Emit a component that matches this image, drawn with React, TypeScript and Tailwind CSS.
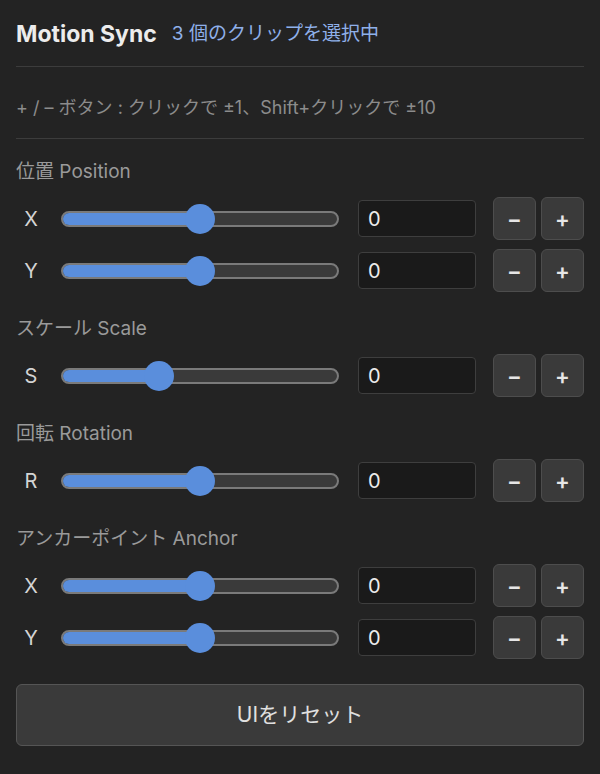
import React from 'react';

type Axis = { label: string; pct: number };
type Group = { title: string; axes: Axis[] };

const groups: Group[] = [
  { title: '位置 Position', axes: [{ label: 'X', pct: 0.5 }, { label: 'Y', pct: 0.5 }] },
  { title: 'スケール Scale', axes: [{ label: 'S', pct: 1 / 3 }] },
  { title: '回転 Rotation', axes: [{ label: 'R', pct: 0.5 }] },
  { title: 'アンカーポイント Anchor', axes: [{ label: 'X', pct: 0.5 }, { label: 'Y', pct: 0.5 }] },
];

const THUMB = 30;

const Slider: React.FC<{ pct: number }> = ({ pct }) => {
  // thumb travels inside the track like a native range input
  const center = `calc(${THUMB / 2}px + (100% - ${THUMB}px) * ${pct})`;
  return (
    <div className="relative flex-1 h-[30px] flex items-center">
      <div className="relative w-full h-4 rounded-full border-2 border-[#7a7a7a] bg-[#3a3a3a] overflow-hidden">
        <div className="h-full bg-[#5a8edc]" style={{ width: center }} />
      </div>
      <div
        className="absolute top-0 w-[30px] h-[30px] rounded-full bg-[#5a8edc]"
        style={{ left: `calc(${center} - ${THUMB / 2}px)` }}
      />
    </div>
  );
};

const StepButton: React.FC<{ children: React.ReactNode }> = ({ children }) => (
  <button className="w-[43px] h-[43px] rounded-md bg-[#3a3a3a] border border-[#4d4d4d] text-[#e6e6e6] text-[22px] font-semibold flex items-center justify-center leading-none">
    {children}
  </button>
);

const AxisRow: React.FC<{ axis: Axis }> = ({ axis }) => (
  <div className="flex items-center h-[43px]">
    <span className="w-[30px] text-center text-[20px] text-[#d4d4d4]">{axis.label}</span>
    <div className="ml-[15px] flex-1 flex">
      <Slider pct={axis.pct} />
    </div>
    <div className="ml-[19px] w-[118px] h-[37px] rounded bg-[#1a1a1a] border border-[#3e3e3e] flex items-center px-[9px] text-[20px] text-[#ececec]">
      0
    </div>
    <div className="ml-[17px] flex gap-[5px]">
      <StepButton>−</StepButton>
      <StepButton>+</StepButton>
    </div>
  </div>
);

export default function App() {
  return (
    <div
      className="min-h-screen w-full bg-[#232323] px-4 pt-[19px] pb-7"
      style={{ fontFamily: 'Inter, "Noto Sans CJK JP", sans-serif' }}
    >
      {/* Header */}
      <div className="flex items-center h-[30px] gap-[15px]">
        <h1 className="text-[23px] font-bold text-[#ececec]">Motion Sync</h1>
        <span className="text-[19px] text-[#8fb0ea]">3 個のクリップを選択中</span>
      </div>
      <div className="mt-[17px] border-b border-[#3c3c3c]" />

      <p className="mt-[29px] h-6 leading-6 text-[18px] text-[#8c8c8c]">
        + / – ボタン : クリックで ±1、Shift+クリックで ±10
      </p>
      <div className="mt-[18px] border-b border-[#3c3c3c]" />

      <div className="mt-[21px] flex flex-col gap-[25px]">
        {groups.map((g) => (
          <section key={g.title} className="flex flex-col">
            <h2 className="h-6 leading-6 text-[19px] text-[#9a9a9a]">{g.title}</h2>
            <div className="mt-[13px] flex flex-col gap-[9px]">
              {g.axes.map((a, i) => (
                <AxisRow key={i} axis={a} />
              ))}
            </div>
          </section>
        ))}

        <button className="h-[62px] w-full rounded-md bg-[#3a3a3a] border border-[#555] text-[21px] text-[#e0e0e0]">
          UIをリセット
        </button>
      </div>
    </div>
  );
}
